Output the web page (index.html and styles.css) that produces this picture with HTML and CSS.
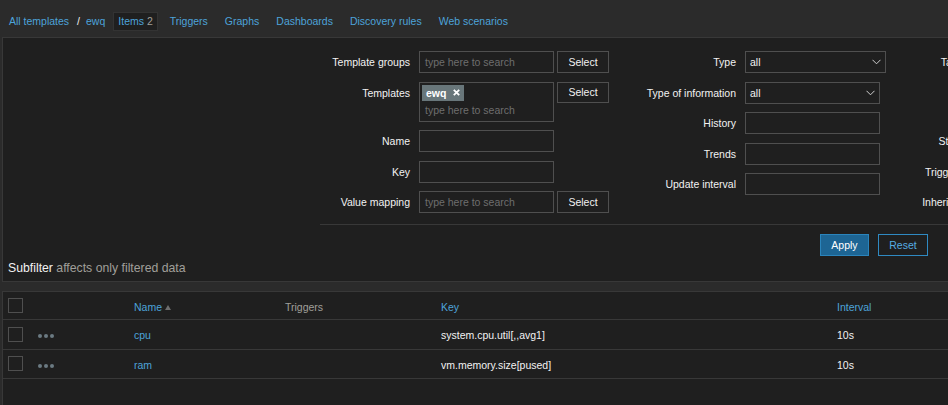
FILE: index.html
```html
<!DOCTYPE html>
<html lang="en">
<head>
<meta charset="utf-8">
<title>Items</title>
<link rel="stylesheet" href="styles.css">
</head>
<body>
<div class="page">
  <nav class="nav">
    <div class="crumbs">
      <a class="link">All templates</a><span class="sep">/</span><a class="link">ewq</a>
    </div>
    <ul class="tabs">
      <li class="tab active"><span class="link">Items</span> <span class="count">2</span></li>
      <li class="tab"><a class="link">Triggers</a></li>
      <li class="tab"><a class="link">Graphs</a></li>
      <li class="tab"><a class="link">Dashboards</a></li>
      <li class="tab"><a class="link">Discovery rules</a></li>
      <li class="tab"><a class="link">Web scenarios</a></li>
    </ul>
  </nav>

  <section class="filter">
    <div class="filter-cols">
      <div class="fcol fcol1">
        <div class="flabel">Template groups</div>
        <div class="fctrl"><div class="input ph">type here to search</div><div class="btn-alt">Select</div></div>

        <div class="flabel">Templates</div>
        <div class="fctrl">
          <div class="multi">
            <span class="chip">ewq<svg class="chip-x" width="7" height="7" viewBox="0 0 7 7"><path d="M0.8 0.8 L6.2 6.2 M6.2 0.8 L0.8 6.2" stroke="#ffffff" stroke-width="1.8" fill="none"/></svg></span>
            <div class="multi-ph">type here to search</div>
          </div>
          <div class="btn-alt short">Select</div>
        </div>

        <div class="flabel">Name</div>
        <div class="fctrl"><div class="input"></div></div>

        <div class="flabel">Key</div>
        <div class="fctrl"><div class="input"></div></div>

        <div class="flabel">Value mapping</div>
        <div class="fctrl"><div class="input ph">type here to search</div><div class="btn-alt">Select</div></div>
      </div>

      <div class="fcol fcol2">
        <div class="flabel">Type</div>
        <div class="fctrl"><div class="select wide"><span>all</span><svg class="chev" width="9" height="6" viewBox="0 0 9 6"><polyline points="0.5,0.8 4.5,4.8 8.5,0.8" fill="none" stroke="#d0d0d0" stroke-width="1"/></svg></div></div>

        <div class="flabel">Type of information</div>
        <div class="fctrl"><div class="select"><span>all</span><svg class="chev" width="9" height="6" viewBox="0 0 9 6"><polyline points="0.5,0.8 4.5,4.8 8.5,0.8" fill="none" stroke="#d0d0d0" stroke-width="1"/></svg></div></div>

        <div class="flabel">History</div>
        <div class="fctrl"><div class="input"></div></div>

        <div class="flabel">Trends</div>
        <div class="fctrl"><div class="input"></div></div>

        <div class="flabel">Update interval</div>
        <div class="fctrl"><div class="input"></div></div>
      </div>

      <div class="fcol fcol3">
        <div class="flabel">Tags</div>
        <div class="fctrl tags-ctrl"></div>

        <div class="flabel">State</div>
        <div class="fctrl"></div>

        <div class="flabel">Triggers</div>
        <div class="fctrl"></div>

        <div class="flabel">Inherited</div>
        <div class="fctrl"></div>
      </div>
    </div>

    <div class="filter-actions">
      <div class="btn apply">Apply</div>
      <div class="btn reset">Reset</div>
    </div>

    <div class="subfilter"><span class="sub-title">Subfilter</span> <span class="muted">affects only filtered data</span></div>
  </section>

  <section class="list">
    <div class="row head">
      <div class="cell"><span class="checkbox"></span></div>
      <div class="cell"></div>
      <div class="cell"><a class="link">Name</a><span class="sort-up"></span></div>
      <div class="cell muted">Triggers</div>
      <div class="cell"><a class="link">Key</a></div>
      <div class="cell"><a class="link">Interval</a></div>
    </div>
    <div class="row">
      <div class="cell"><span class="checkbox"></span></div>
      <div class="cell"><span class="dots"><i></i><i></i><i></i></span></div>
      <div class="cell"><a class="link">cpu</a></div>
      <div class="cell"></div>
      <div class="cell">system.cpu.util[,,avg1]</div>
      <div class="cell">10s</div>
    </div>
    <div class="row">
      <div class="cell"><span class="checkbox"></span></div>
      <div class="cell"><span class="dots"><i></i><i></i><i></i></span></div>
      <div class="cell"><a class="link">ram</a></div>
      <div class="cell"></div>
      <div class="cell">vm.memory.size[pused]</div>
      <div class="cell">10s</div>
    </div>
  </section>
</div>
</body>
</html>
```

FILE: styles.css
```css
* { box-sizing: border-box; }

html, body { height: 100%; }

body {
  margin: 0;
  background: #2b2b2b;
  color: #f2f2f2;
  font-family: "Liberation Sans", Arial, sans-serif;
  font-size: 10.5px;
  overflow: hidden;
}

.page {
  width: 1300px;
  padding-left: 2px;
}

.link { color: #4da3da; text-decoration: none; }
.muted { color: #a09f9a; }

/* navigation */
.nav {
  height: 37px;
  display: flex;
  align-items: flex-start;
  padding: 12px 0 0 7px;
}
.crumbs {
  display: flex;
  line-height: 19px;
}
.sep { margin: 0 6px 0 8px; color: #f2f2f2; }
.tabs {
  list-style: none;
  margin: 0 0 0 8px;
  padding: 0;
  display: flex;
  gap: 7px;
}
.tab {
  height: 19px;
  padding: 0 4px;
  border: 1px solid transparent;
  line-height: 17px;
}
.tab.active {
  background: #1f1f1f;
  border-color: #333333;
}
.count { color: #a09f9a; }

/* filter */
.filter {
  border: 1px solid #383838;
  background: #1f1f1f;
  padding-top: 13px;
}
.filter-cols { display: flex; }
.fcol {
  display: grid;
  column-gap: 9px;
  row-gap: 8.5px;
  align-content: start;
}
.fcol1 { width: 620px; grid-template-columns: 407px auto; }
.fcol2 { width: 273px; grid-template-columns: 113px auto; }
.fcol3 { grid-template-columns: 67px auto; }
.flabel {
  text-align: right;
  line-height: 22px;
  white-space: nowrap;
}
.fctrl {
  display: flex;
  gap: 3px;
  align-items: flex-start;
  min-height: 22px;
}
.tags-ctrl { height: 70.5px; }

.input {
  width: 135px;
  height: 22px;
  border: 1px solid #4f4f4f;
  background: #1f1f1f;
  padding: 0 5px;
  line-height: 20px;
}
.ph { color: #6e6e6e; }

.btn-alt {
  width: 52px;
  height: 22px;
  border: 1px solid #4f4f4f;
  background: #1f1f1f;
  text-align: center;
  line-height: 20px;
  color: #f2f2f2;
}
.btn-alt.short { height: 21px; line-height: 19px; }

.multi {
  width: 135px;
  height: 40px;
  border: 1px solid #4f4f4f;
  padding: 2px;
}
.chip {
  display: inline-flex;
  align-items: center;
  height: 16px;
  padding: 0 4px 0 4px;
  background: #68767a;
  color: #ffffff;
  font-weight: bold;
}
.chip-x {
  display: block;
  margin-left: 7px;
}
.multi-ph {
  color: #6e6e6e;
  padding-left: 3px;
  line-height: 19px;
}

.select {
  width: 135px;
  height: 22px;
  border: 1px solid #4f4f4f;
  background: #1f1f1f;
  padding: 0 4px;
  display: flex;
  align-items: center;
  justify-content: space-between;
  color: #f2f2f2;
}
.select.wide { width: 141px; }
.chev { display: block; }

.filter-actions {
  margin: 11px 0 0 317px;
  border-top: 1px solid #383838;
  padding: 9px 0 0 500px;
  display: flex;
  gap: 9px;
}
.btn {
  height: 22px;
  line-height: 20px;
  text-align: center;
  border: 1px solid;
}
.apply {
  width: 49px;
  background: #1d6594;
  border-color: #2a84bc;
  color: #ffffff;
}
.reset {
  width: 50px;
  background: transparent;
  border-color: #2f8ac2;
  color: #55acE2;
}

.subfilter {
  padding: 5px 0 6px 5px;
  font-size: 12.25px;
  line-height: 14px;
}
.sub-title { color: #f2f2f2; }

/* list table */
.list {
  margin-top: 9px;
  border: 1px solid #383838;
  background: #1f1f1f;
  height: 200px;
}
.row {
  display: grid;
  grid-template-columns: 30px 96px 151px 156px 396px 1fr;
  padding-left: 5px;
  height: 29.5px;
  border-bottom: 1px solid #383838;
  align-items: center;
}
.row.head { height: 28px; }
.cell {
  white-space: nowrap;
  display: flex;
  align-items: center;
  padding-top: 2px;
}
.cell:first-child { padding-top: 0; }
.checkbox {
  display: block;
  width: 15px;
  height: 15px;
  border: 1px solid #4f4f4f;
}
.sort-up {
  display: inline-block;
  margin-left: 3px;
  margin-top: 2px;
  border-left: 3px solid transparent;
  border-right: 3px solid transparent;
  border-bottom: 5px solid #6e6e6e;
}
.dots {
  display: flex;
  gap: 2px;
  margin-top: 2px;
}
.dots i {
  display: block;
  width: 4px;
  height: 4px;
  border-radius: 50%;
  background: #6b7a82;
}
```
